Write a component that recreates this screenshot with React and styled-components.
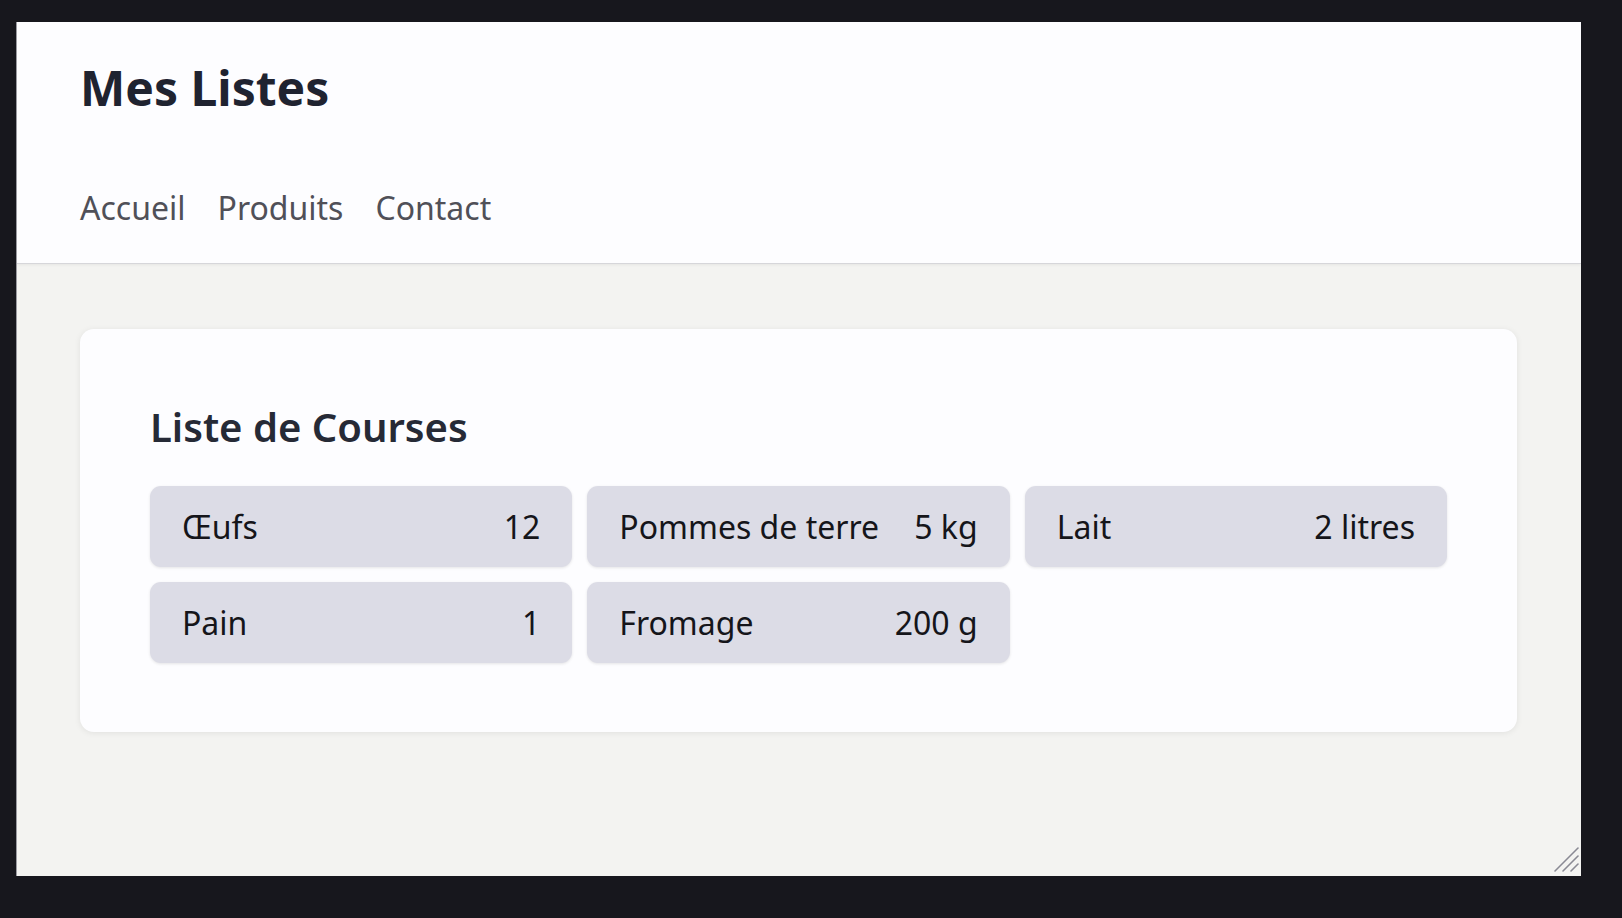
import React from "react";
import styled, { createGlobalStyle } from "styled-components";

const Global = createGlobalStyle`
  html, body { margin: 0; padding: 0; }
  body {
    background: #17171d;
    font-family: "Noto Sans", "Open Sans", sans-serif;
    width: 1622px;
    height: 918px;
    overflow: hidden;
  }
`;

const Screen = styled.div`
  box-sizing: border-box;
  width: 1622px;
  height: 918px;
  padding: 22px 41px 42px 16px;
  display: flex;
`;

const Frame = styled.div`
  position: relative;
  flex: 1;
  display: flex;
  flex-direction: column;
  background: #f3f3f1;
  overflow: hidden;
  border-left: 1px solid #9a9aa0;
`;

const Header = styled.header`
  background: #fdfdff;
  padding: 33px 64px 34px 63px;
  border-bottom: 1px solid #d6d6da;
  box-shadow: 0 1px 3px rgba(0, 0, 0, 0.06);
`;

const Title = styled.h1`
  margin: 0 0 66px;
  font-size: 48px;
  font-weight: 700;
  color: #1f2330;
  line-height: normal;
`;

const Nav = styled.nav`
  display: flex;
  gap: 32px;
`;

const NavLink = styled.a`
  font-size: 32px;
  color: #505058;
  text-decoration: none;
  line-height: normal;
`;

const Main = styled.main`
  flex: 1;
  padding: 65px 64px 0 63px;
`;

const Card = styled.section`
  background: #fdfdff;
  border-radius: 14px;
  box-shadow: 0 1px 6px rgba(0, 0, 0, 0.08);
  padding: 70px 70px 69px;
`;

const Heading = styled.h2`
  margin: 0 0 32px;
  font-size: 40px;
  font-weight: 600;
  color: #262a36;
  line-height: normal;
`;

const Grid = styled.div`
  display: grid;
  grid-template-columns: repeat(3, 1fr);
  gap: 15px;
`;

const Item = styled.div`
  display: flex;
  justify-content: space-between;
  align-items: center;
  padding: 19px 32px;
  background: #dcdce6;
  border-radius: 11px;
  box-shadow: 0 1px 3px rgba(0, 0, 0, 0.1);
  font-size: 32px;
  color: #15151a;
  line-height: normal;
`;

const Name = styled.span``;
const Qty = styled.span``;

const Grip = styled.svg`
  position: absolute;
  right: 1px;
  bottom: 3px;
  width: 28px;
  height: 28px;
`;

const items = [
  { name: "Œufs", qty: "12" },
  { name: "Pommes de terre", qty: "5 kg" },
  { name: "Lait", qty: "2 litres" },
  { name: "Pain", qty: "1" },
  { name: "Fromage", qty: "200 g" },
];

export default function App() {
  return (
    <>
      <Global />
      <Screen>
        <Frame>
          <Header>
            <Title>Mes Listes</Title>
            <Nav>
              <NavLink href="#">Accueil</NavLink>
              <NavLink href="#">Produits</NavLink>
              <NavLink href="#">Contact</NavLink>
            </Nav>
          </Header>
          <Main>
            <Card>
              <Heading>Liste de Courses</Heading>
              <Grid>
                {items.map((it) => (
                  <Item key={it.name}>
                    <Name>{it.name}</Name>
                    <Qty>{it.qty}</Qty>
                  </Item>
                ))}
              </Grid>
            </Card>
          </Main>
          <Grip viewBox="0 0 28 28">
            <g stroke="#8a8a94" strokeWidth="1.6" strokeLinecap="round">
              <line x1="3" y1="26" x2="26" y2="3" />
              <line x1="11" y1="26" x2="26" y2="11" />
              <line x1="19" y1="26" x2="26" y2="19" />
            </g>
          </Grip>
        </Frame>
      </Screen>
    </>
  );
}
